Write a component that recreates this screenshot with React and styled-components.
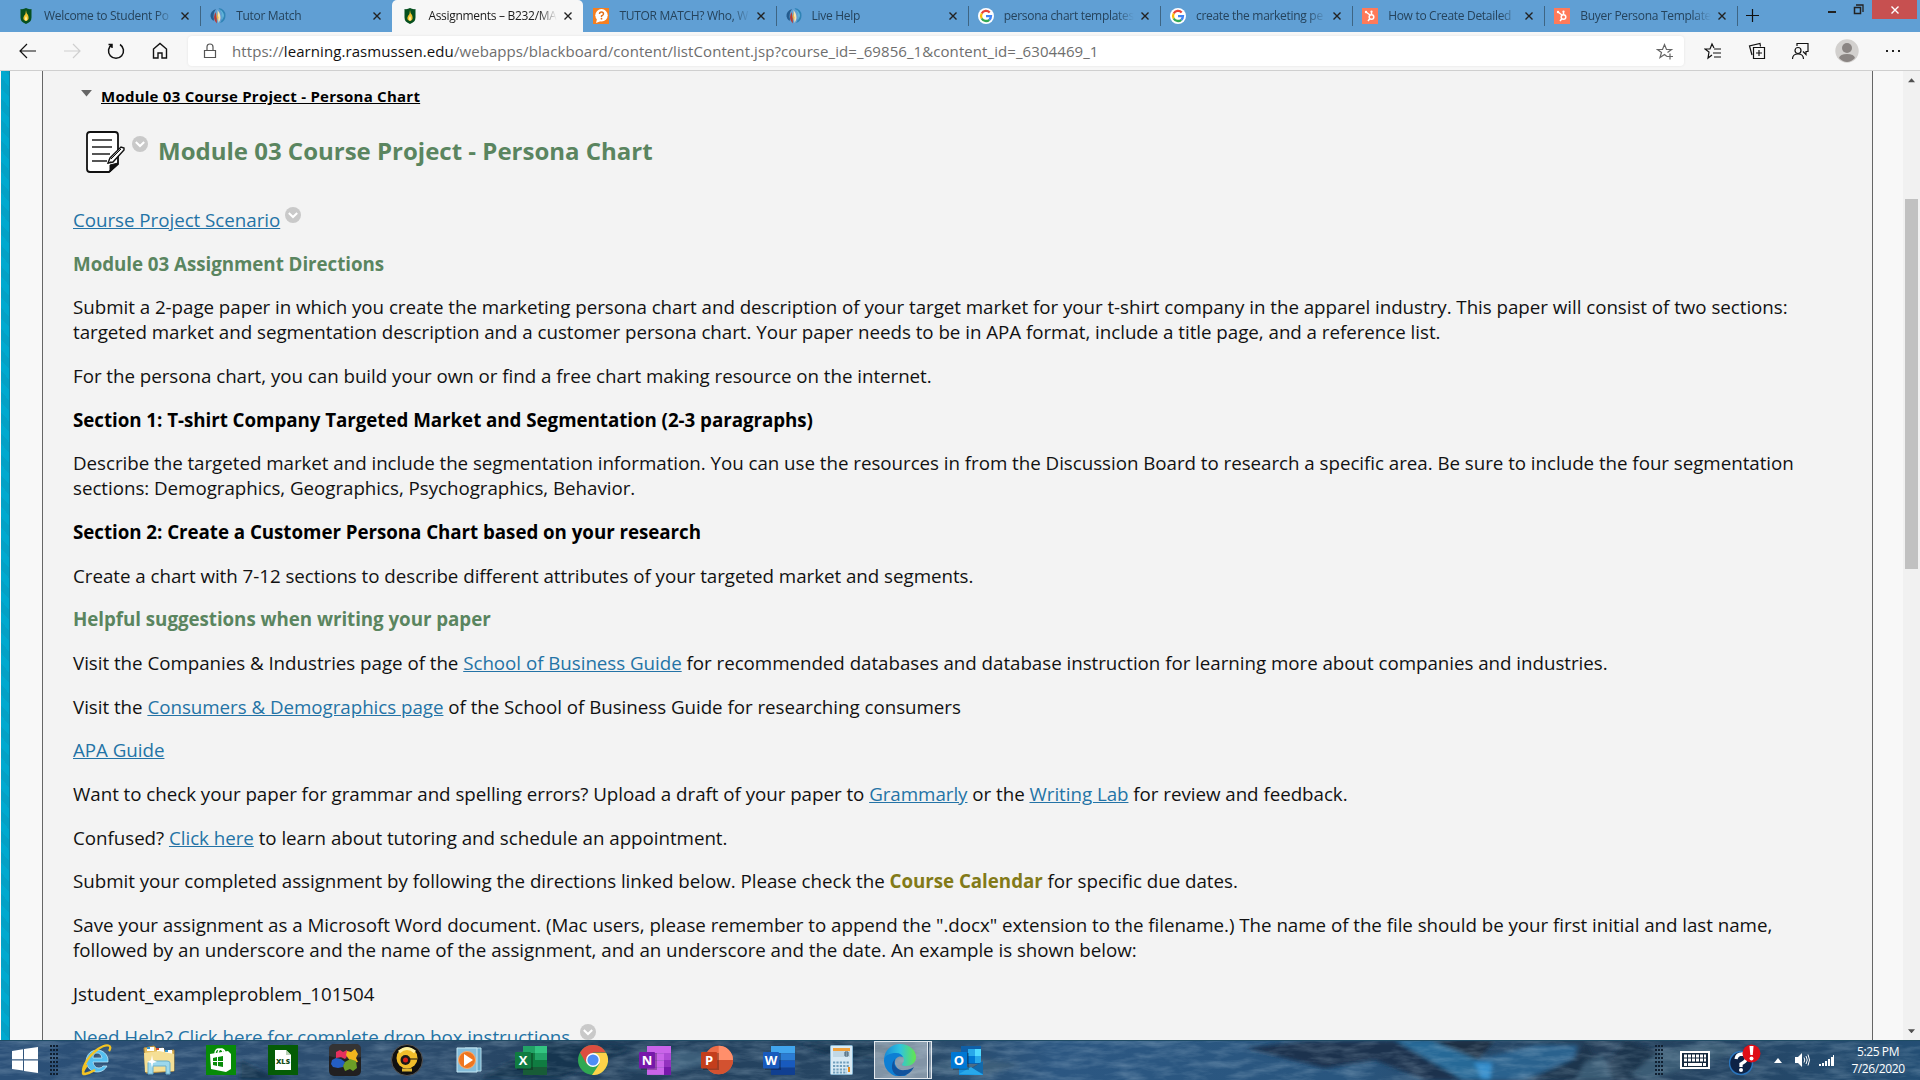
import React from "react";
import styled, { createGlobalStyle } from "styled-components";

const GlobalStyle = createGlobalStyle`
  * {
    box-sizing: border-box;
  }

  body {
    margin: 0;
    overflow: hidden;
    font-family: "Open Sans", "Noto Sans", sans-serif;
  }
`;

const Screen = styled.div`
  display: flex;
  flex-direction: column;
  width: 1920px;
  height: 1080px;
  overflow: hidden;
`;

const TabStrip = styled.div`
  display: flex;
  height: 32px;
  padding-left: 8px;
  background: #609fd4;
`;

const Tab = styled.div`
  display: flex;
  align-items: center;
  width: ${props => (props.$active ? 191 : 192.2)}px;
  padding: 0 11px 0 10px;
  border-radius: 5px 5px 0 0;
  background: ${props => (props.$active ? "#f7f7f7" : "transparent")};
  color: ${props => (props.$active ? "#1b1b1b" : "#25435c")};

  svg {
    flex: none;
  }
`;

const TabTitle = styled.span`
  flex: 1;
  margin: 0 7px 0 10px;
  overflow: hidden;
  font-size: 12px;
  letter-spacing: -0.3px;
  line-height: 18px;
  white-space: nowrap;
  mask-image: linear-gradient(90deg, #000 86%, transparent);
`;

const Separator = styled.div`
  width: 1px;
  height: 20px;
  margin: 6px -1px 0 0;
  background: #3e6583;
`;

const WindowButtons = styled.div`
  display: flex;
  margin-left: auto;
`;

const CloseWindow = styled.div`
  display: flex;
  align-items: center;
  justify-content: center;
  width: 45px;
  height: 19px;
  margin-right: 3px;
  background: #c75050;
`;

const Toolbar = styled.div`
  display: flex;
  align-items: center;
  height: 39px;
  padding: 0 18px 1px 17px;
  border-bottom: 1px solid #cfcfcf;
  background: #f7f7f7;

  > svg {
    flex: none;
  }
`;

const NavButtons = styled.div`
  display: flex;
  width: 171px;
  gap: 22px;
`;

const AddressBar = styled.div`
  display: flex;
  align-items: center;
  width: 1496px;
  height: 30px;
  padding: 0 10px 0 14px;
  border-radius: 4px;
  background: #fff;
  box-shadow: 0 0 3px rgba(0, 0, 0, 0.08);
`;

const Url = styled.div`
  flex: 1;
  margin-left: 14px;
  color: #6e6e6e;
  font-size: 15px;
  letter-spacing: 0.08px;
  line-height: 20px;
  white-space: nowrap;

  b {
    color: #111;
    font-weight: 400;
  }
`;

const ToolbarActions = styled.div`
  display: flex;
  flex: 1;
  align-items: center;
  justify-content: space-between;
  margin-left: 20px;
`;

const Page = styled.div`
  display: flex;
  height: 969px;
  background: #f8f8f8;
`;

const Stripe = styled.div`
  width: 9px;
  margin: 0 32px 0 1px;
  border-right: 1px solid #0f86a8;
  background: repeating-linear-gradient(
    48deg,
    #00a9cf 0,
    #00a9cf 7px,
    #03a1c6 7px,
    #03a1c6 14px
  );
`;

const Content = styled.main`
  width: 1831px;
  padding: 13px 0 0 30px;
  overflow: hidden;
  border: solid #666;
  border-width: 0 1px;
  background: #f3f3f3;
  color: #111;
  font-size: 18.75px;
  line-height: 25px;
`;

const Breadcrumb = styled.div`
  display: flex;
  height: 26px;
  padding-left: 8px;
  gap: 9px;

  a {
    color: #000;
    font-size: 15px;
    font-weight: 700;
    text-decoration: underline;
    letter-spacing: 0.25px;
  }

  svg {
    margin-top: 6px;
  }
`;

const TitleRow = styled.div`
  display: flex;
  height: 60px;
  margin-top: 19px;
  padding-left: 13px;

  > svg:nth-child(1) {
    margin-top: 2px;
  }

  > svg:nth-child(2) {
    margin: 7px 10px 0 7px;
  }
`;

const Title = styled.h1`
  margin: 6px 0 0;
  color: #5a855f;
  font-size: 24px;
  font-weight: 700;
  line-height: 32px;
`;

const Paragraph = styled.p`
  margin: 0 0 18.68px;
  color: ${props => (props.$green ? "#5a855f" : props.$bold ? "#000" : "#111")};
  font-weight: ${props => (props.$bold || props.$green ? 700 : 400)};
  letter-spacing: ${props => (props.$bold || props.$green ? -0.045 : -0.034)}px;
  white-space: nowrap;

  svg {
    margin: -4px 0 0 5px;
    vertical-align: 4px;
  }
`;

const Body = styled.div`
  padding-top: 18px;
`;

const Link = styled.a`
  color: #2473a6;
  text-decoration: underline;
`;

const Calendar = styled.b`
  color: #827a18;
`;

const Scrollbar = styled.div`
  display: flex;
  flex-direction: column;
  align-items: center;
  width: 17px;
  margin-left: auto;
  padding: 7px 0;
  background: #f1f1f1;

  svg:last-child {
    margin-top: auto;
  }
`;

const Thumb = styled.div`
  width: 13px;
  height: 370px;
  margin-top: 116px;
  background: #c1c1c1;
`;

const Taskbar = styled.footer`
  position: relative;
  display: flex;
  align-items: center;
  height: 40px;
  padding-left: 12px;
  overflow: hidden;
  background: #2a5179;

  > svg,
  > div {
    position: relative;
    flex: none;
  }

  > svg.wallpaper {
    position: absolute;
    inset: 0;
  }
`;

const Grip = styled.div`
  width: 9px;
  height: 31px;
  margin-left: ${props => props.$left}px;
  background: radial-gradient(circle at 1px 1px, #101f30 1px, transparent 1.3px) 0 0 / 3px 4px;
`;

const Apps = styled.div`
  display: flex;
  margin-left: 7px;
`;

const AppSlot = styled.div`
  display: flex;
  align-items: center;
  justify-content: center;
  width: 62px;
  height: 40px;

  &:last-child {
    padding-left: 3px;
  }
`;

const ActiveApp = styled.div`
  display: flex;
  align-items: center;
  width: 58px;
  height: 38px;
  padding-left: 9px;
  border: 1px solid #e3e9ef;
  background: linear-gradient(90deg, transparent 52px, #e3e9ef 52px 53px, #35506d 53px 54px, transparent 54px),
    rgba(255, 255, 255, 0.42);
`;

const Tray = styled.div`
  display: flex;
  align-items: center;
  margin-left: 16px;

  svg:nth-child(2) {
    margin: 0 13px 0 19px;
  }

  svg:nth-child(4) {
    margin: 0 9px 0 13px;
  }
`;

const Clock = styled.div`
  width: 60px;
  margin-left: 13px;
  color: #fff;
  font-size: 12px;
  line-height: 17px;
  letter-spacing: -0.4px;
  text-align: center;
`;

const Rasmussen = () => (
  <svg width="16" height="16" viewBox="0 0 16 16">
    <path d="M2.5 1Q5.5 1.5 8 0q2.500 1.500 5.500 1v8.500q0 4.500-5.500 6.500-5.500-2-5.500-6.500z" fill="#07501f" />
    <path d="M8 2q0 3 2 5 2 5-2 6-4-1-2-5 2-2 2-6z" fill="#f2c32f" />
    <path d="M8 8q2 3 0 5-2-2 0-5z" fill="#fff2a0" />
  </svg>
);

const TutorLogo = () => (
  <svg width="16" height="16" viewBox="0 0 16 16">
    <path d="M6 1Q0 3 .5 8.500q.5 3 3 4.500l.5-2Q2.500 6 6 1z" fill="#245c8f" />
    <path d="M8.500 0Q15.500 1 15.500 7.500q0 6-5.500 7.500 3-4 2-8.500Q11 2.500 8.500 0z" fill="#2f83b5" />
    <path d="M10 1.500q4 2.500 4 6.500-1 3-2 4 1-4-2-10.500z" fill="#5fb3d8" />
    <path d="M7.500 2q4 5 2.500 10l-1.500 3Q8 9 7.500 2z" fill="#f6e3b5" />
    <path d="M5.500 4Q3 9 5 13l2 2.500Q7 9 5.500 4z" fill="#b73834" />
    <path d="M7 4q-1 5 .8 9l.7-3.500z" fill="#f0b440" />
  </svg>
);

const Question = () => (
  <svg width="16" height="16" viewBox="0 0 16 16">
    <rect width="16" height="16" fill="#f57f20" />
    <circle cx="8.5" cy="7.3" r="6.2" fill="#fff" />
    <path d="m4 11-1 4 5-2z" fill="#fff" />
    <path d="M6.5 6q0-2 2-2t2 2q0 1-2 2v1" fill="none" stroke="#e26e18" strokeWidth="1.4" />
    <circle cx="8.5" cy="10.7" r=".9" fill="#e26e18" />
  </svg>
);

const Google = () => (
  <svg width="16" height="16" viewBox="0 0 16 16">
    <circle cx="8" cy="8" r="8" fill="#fff" />
    <g fill="none" strokeWidth="2.3">
      <path d="M11.7 4.5A5 5 0 0 0 3.7 5.5" stroke="#ea4335" />
      <path d="M3.7 5.5a5 5 0 0 0 0 5" stroke="#fbbc05" />
      <path d="M3.7 10.5a5 5 0 0 0 7.6 1.3" stroke="#34a853" />
      <path d="M8 8.1h5a5 5 0 0 1-1.7 3.7" stroke="#4285f4" />
    </g>
  </svg>
);

const Hubspot = () => (
  <svg width="16" height="16" viewBox="0 0 16 16">
    <rect width="16" height="16" fill="#ff7a59" />
    <g fill="none" stroke="#fff" strokeWidth="1.5">
      <circle cx="9.5" cy="9" r="2.3" />
      <path d="m4 4 4 3m1.5-3.5v3M8 10.5 6 13" />
    </g>
    <circle cx="4" cy="4" r="1.2" fill="#fff" />
    <circle cx="9.5" cy="3.5" r="1.1" fill="#fff" />
  </svg>
);

const Cross = ({ color = "#222", size = 8 }) => (
  <svg width={size} height={size} viewBox="0 0 8 8">
    <path d="m.5.5 7 7m0-7-7 7" stroke={color} strokeWidth="1.4" />
  </svg>
);

const Line = ({ children, size = 22, color = "#111", width = 1.2 }) => (
  <svg
    width={size}
    height={size}
    viewBox={`0 0 ${size} ${size}`}
    fill="none"
    stroke={color}
    strokeWidth={width}
  >
    {children}
  </svg>
);

const Chevron = () => (
  <svg width="16" height="16" viewBox="0 0 16 16">
    <circle cx="8" cy="8" r="8" fill="#c9c9c9" />
    <path d="m3.8 6 4.2 4 4.2-4" fill="none" stroke="#fff" strokeWidth="2" />
  </svg>
);

const Triangle = ({ up, width = 9, color = "#505050" }) => (
  <svg width={width} height={width / 2 + 1} viewBox="0 0 10 6">
    <path d={up ? "M0 6 5 0l5 6z" : "M0 0h10L5 6z"} fill={color} />
  </svg>
);

const Assignment = () => (
  <svg width="39" height="44" viewBox="0 0 39 44">
    <path
      d="M4 1h25q3 0 3 3v29l-9 8H4q-3 0-3-3V4q0-3 3-3z"
      fill="#fff"
      stroke="#111"
      strokeWidth="1.8"
    />
    <path d="M6 9h20M6 16h20M6 23h18M6 30h15" stroke="#555" strokeWidth="2" />
    <path d="M24 34 32 32 24 41z" fill="#111" stroke="#111" />
    <path d="m22 32 2-5 11-11 3 1v2L27 31z" fill="#fff" stroke="#111" strokeWidth="1.4" />
    <path d="m25 28 10-10M22 32l3-1" stroke="#111" />
  </svg>
);

const Wallpaper = () => (
  <svg className="wallpaper" width="1920" height="40" viewBox="0 0 1920 40">
    <defs>
      <filter id="rock" x="0" y="0" width="100%" height="100%">
        <feTurbulence type="fractalNoise" baseFrequency=".035 .14" numOctaves="4" seed="8" />
        <feColorMatrix values="0 0 0 0 .45  0 0 0 0 .6  0 0 0 0 .72  1.6 0 0 0 -.62" />
      </filter>
      <filter id="soft">
        <feGaussianBlur stdDeviation="2" />
      </filter>
      <linearGradient id="sea">
        <stop offset="0" stopColor="#2b5078" />
        <stop offset=".22" stopColor="#2c4c6d" />
        <stop offset=".32" stopColor="#213e5a" />
        <stop offset=".48" stopColor="#284866" />
        <stop offset=".55" stopColor="#2c5782" />
        <stop offset=".7" stopColor="#29567f" />
        <stop offset=".83" stopColor="#263f59" />
        <stop offset="1" stopColor="#234e74" />
      </linearGradient>
    </defs>
    <rect width="1920" height="40" fill="url(#sea)" />
    <g filter="url(#soft)">
      <path d="m1245 8 60-7h90l70 39h-40l-50-20-50 8z" fill="#1a324e" />
      <path d="m1395 0h50l43 28-3 12h-22z" fill="#256997" />
      <path d="m1430 0h65l-17 20z" fill="#1b2f42" />
      <path d="m1475 20 60-15 43 0-4 14-50 21h-42z" fill="#2c628e" />
      <path d="m1474 22 18 1-2 17h-8z" fill="#368fcd" />
      <path d="m1530 40 45-22 12-15 10 20-18 17zM1625 0l40 14-30 26h-40z" fill="#1c344d" />
      <path d="m1630 35 30-25 60-8 20 10-90 28zm-55 5 10-18 18-8 10 26z" fill="#3b5b75" />
      <path d="m240 20 40 20h-40zM550 0l80 8-70 30h-80zM800 4l55-4 70 12-80 8z" fill="#18344f" />
      <path d="m620 30 60-21 60 8-60 14zM920 30l40-15 60 10-40 12z" fill="#3e5e7a" />
    </g>
    <rect width="1920" height="40" filter="url(#rock)" opacity=".36" />
    <path d="M0 .5h1920" stroke="#1f4c64" />
  </svg>
);

const WindowsLogo = () => (
  <svg width="26" height="26" viewBox="0 0 26 26">
    <path d="M0 4 11 2.3v10H0zM12 2 26 0v12.3H12zM0 13.5h11v10L0 22zM12 13.5h14V26l-14-2z" fill="#fff" />
  </svg>
);

const InternetExplorer = () => (
  <svg width="32" height="32" viewBox="0 0 32 32">
    <path
      d="M26 22A11 11 0 1 1 27 15v3H12q1 6 6 6 3 0 4-2zM12 14h9q-1-5-5-5t-4 5z"
      fill="#55bff0"
      stroke="#c7efff"
      strokeWidth=".7"
    />
    <path d="M6 21Q-1 31 4 30q5-1 10-4M4 30C-2 28 6 13 17 5 26-1 32 1 28 7" fill="none" stroke="#f3c323" strokeWidth="2.3" />
  </svg>
);

const Explorer = () => (
  <svg width="32" height="30" viewBox="0 0 32 30">
    <path d="M1 3 11 1l3 3 6-1 2 3 9-1v21L3 28z" fill="#e5bf61" stroke="#b48b3c" />
    <path d="M4 2h7v4H4zM14 3h7v4h-7zM22 5h7v4h-7z" fill="#fff" />
    <path d="M4 2h3v2H4zM22 5h3v2h-3z" fill="#3796cc" />
    <path d="M13 3h3v2h-3z" fill="#d84a30" />
    <path d="m1 8 15-2 15 3v17L2 27z" fill="#f5df95" />
    <path d="M5 29V18q0-2 3-2h16q3 0 3 2v11h-4v-8H10v8z" fill="#9dd8ed" stroke="#6baec9" />
    <path d="m9 10 1 5 4 2-4 1-1 5-1-5-4-1 4-2z" fill="#fff" />
  </svg>
);

const Store = () => (
  <svg width="30" height="30" viewBox="0 0 30 30">
    <rect width="30" height="30" fill="#078b08" />
    <path d="m4 9 18-3 3 3v15l-5 3-15-3z" fill="#fff" />
    <path d="M9 9q0-5 4-5t4 4M12 8q1-5 4-4t3 4" fill="none" stroke="#fff" strokeWidth="1.4" />
    <path d="m7 13 4-1v4H7zm5-1 5-1v5h-5zm-5 5h4v4l-4-1zm5 0h5v5l-5-1z" fill="#078b08" />
  </svg>
);

const Xls = () => (
  <svg width="30" height="30" viewBox="0 0 30 30">
    <rect width="30" height="30" fill="#055c06" />
    <path d="M7 5h11l5 5v15H7z" fill="#fff" />
    <path d="M18 5v5h5" fill="#bad1b8" />
    <text x="15" y="19" textAnchor="middle" fontFamily="Open Sans" fontSize="7.5" fontWeight="800" fill="#164b18">
      XLS
    </text>
  </svg>
);

const Puzzle = () => (
  <svg width="32" height="32" viewBox="0 0 32 32">
    <rect width="32" height="32" rx="5" fill="#211f20" />
    <path d="M0 5q0-5 5-5h22q5 0 5 5v8Q16 17 0 12z" fill="#464445" opacity=".55" />
    <path d="m7 8 4-2 3 2 4-2 1 5-3 4-4-2-5 1z" fill="#e6305d" />
    <path d="m18 7 4 1 4-3 3 5-2 4 2 4-6 1-4-5-2-3z" fill="#f0b51d" />
    <path d="m3 16 4-2 5 1 4 3-2 5-5 1-5-1-2-3z" fill="#245ec3" />
    <path d="m16 18 5-3 6 2 1 7-4 3-3-2-5 2-2-5z" fill="#6b9d27" />
  </svg>
);

const Webcam = () => (
  <svg width="32" height="32" viewBox="0 0 32 32">
    <circle cx="16" cy="16" r="15.5" fill="#101010" stroke="#555" />
    <circle cx="16" cy="14" r="10.5" fill="#f0bd2b" />
    <path d="M8 8q8-7 16 0" stroke="#fff09d" strokeWidth="3" fill="none" />
    <circle cx="14.5" cy="16" r="5" fill="#191919" />
    <circle cx="14.5" cy="16" r="2.5" fill="#d31f18" />
    <path d="M11 26h10" stroke="#ddb533" strokeWidth="3" />
    <path d="M19 15h7" stroke="#111" />
  </svg>
);

const MediaPlayer = () => (
  <svg width="26" height="26" viewBox="0 0 26 26">
    <path d="M9 1h16v23H9z" fill="#6aa9c9" stroke="#b5ddeb" />
    <path d="M1 1h20v24H1z" fill="#85bdda" stroke="#c5e7f3" />
    <circle cx="11" cy="13" r="8.5" fill="#ef761f" stroke="#f9ad70" />
    <path d="m8 7 9 6-9 6z" fill="#fff" />
  </svg>
);

const shades = {
  N: ["#ca64ea", "#ca64ea", "#ca64ea", "#ca64ea"],
  W: ["#41a5ee", "#2b7cd3", "#185abd", "#103f91"]
};

const plates = { X: "#107c41", N: "#7719aa", P: "#c43e1c", W: "#185abd", O: "#0078d4" };

const Office = ({ letter }) => (
  <svg width="32" height="30" viewBox="0 0 32 30">
    {letter === "X" && (
      <g>
        <path d="M8 1h12v7H8z" fill="#21a366" />
        <path d="M20 1h12v7H20z" fill="#33c481" />
        <path d="M8 8h12v14H8z" fill="#107c41" />
        <path d="M20 8h12v7H20z" fill="#21a366" />
        <path d="M20 15h12v7H20z" fill="#107c41" />
        <path d="M8 22h24v8H8z" fill="#185c37" />
      </g>
    )}
    {(letter === "N" || letter === "W") &&
      shades[letter].map((color, i) => (
        <rect key={i} x="8" y={1 + i * 7.2} width="24" height="7.3" fill={color} />
      ))}
    {letter === "N" && (
      <g>
        <path d="M25 8h7v7h-7z" fill="#ae4bd5" />
        <path d="M25 15h7v7h-7z" fill="#9332bf" />
        <path d="M25 22h7v8h-7z" fill="#7719aa" />
      </g>
    )}
    {letter === "P" && (
      <g>
        <circle cx="17.7" cy="15" r="14.3" fill="#ed6c47" />
        <path d="M17.700 .7A14.300 14.300 0 0 1 32 15H17.700z" fill="#ff8f6b" />
        <path d="M3.400 15H32a14.300 14.300 0 0 1-28.600 0z" fill="#d35230" />
      </g>
    )}
    {letter === "O" && (
      <g>
        <path d="M10 1h20v18H10z" fill="#0f5fa8" />
        <path d="M17 4h7v7h-7z" fill="#28a8ea" />
        <path d="M24 4h6v7h-6z" fill="#50d9ff" />
        <path d="M17 11h7v7h-7z" fill="#0078d4" />
        <path d="M24 11h6v7h-6z" fill="#28a8ea" />
        <path d="m8 16 12 8 12-8v14H8z" fill="#1490df" />
        <path d="m20 23 12-7v13z" fill="#123b6d" opacity=".45" />
        <path d="m8 29 12-7 12 8z" fill="#28a8ea" />
      </g>
    )}
    <rect x="2" y="8" width="16" height="17" fill="#000" opacity=".25" />
    <rect y="7" width="16" height="16.5" rx="1" fill={plates[letter]} />
    <text x="8" y="19.6" textAnchor="middle" fontFamily="Open Sans" fontSize="13" fontWeight="700" fill="#fff">
      {letter}
    </text>
  </svg>
);

const Chrome = () => (
  <svg width="30" height="30" viewBox="0 0 30 30">
    <circle cx="15" cy="15" r="15" fill="#30a852" />
    <path d="M2 7.5A15 15 0 0 1 28 7.5H15L8.5 18.8z" fill="#dc4e41" />
    <path d="M28.2 8A15 15 0 0 1 14 30l7.5-11.3L15 8z" fill="#fdd249" />
    <circle cx="15" cy="15" r="7" fill="#fff" />
    <circle cx="15" cy="15" r="5.6" fill="#4e8df5" />
  </svg>
);

const Calculator = () => (
  <svg width="23" height="30" viewBox="0 0 23 30">
    <rect x=".5" y=".5" width="22" height="29" rx="1" fill="#d8eaf4" stroke="#86b5d2" />
    <path d="M3 3h17v3H3z" fill="#efa13d" />
    <path d="M3 6h17v6H3z" fill="#c1d8e5" />
    <path d="M15 7h3v4h-3zM15 9h3" fill="none" stroke="#405c70" />
    <path d="M3 17.5h16M3 21h16M3 24.5h14M3 27.5h14" stroke="#709fbd" strokeWidth="2" strokeDasharray="2.2 1.2" />
    <path d="M18 22h2v5h-2z" fill="#e58b1d" />
  </svg>
);

const Edge = () => (
  <svg width="32" height="32" viewBox="0 0 32 32">
    <defs>
      <linearGradient id="edgeTop">
        <stop offset="0" stopColor="#1688d7" />
        <stop offset=".5" stopColor="#2fc3df" />
        <stop offset="1" stopColor="#64e64b" />
      </linearGradient>
    </defs>
    <path d="M0 16C0 6 8 0 16 0c9 0 16 6 16 13 0 6-5 9-10 9-4 0-5-1-3-3 3-5-1-9-7-9C5 10 1 14 0 16z" fill="url(#edgeTop)" />
    <path d="M0 16c1-5 6-7 12-7 4 0 6 2 7 4-5-2-9 2-8 7 2 6 8 9 12 11A16 16 0 0 1 0 16z" fill="#0d7fd4" />
    <path d="M11 15c-3 8 4 12 10 11 4 0 7-2 9-3-3 6-8 9-14 9C7 31 6 20 11 15z" fill="#12539d" />
  </svg>
);

const Keyboard = () => (
  <svg width="30" height="18" viewBox="0 0 30 18">
    <rect x="1" y="1" width="28" height="16" fill="#14283c" stroke="#fff" strokeWidth="2" />
    <path d="M4 5h22M4 9h22" stroke="#fff" strokeWidth="3" strokeDasharray="3 1" />
    <path d="M4 13.5h3m1 0h14m1 0h3" stroke="#fff" strokeWidth="3" />
  </svg>
);

const Help = () => (
  <svg width="32" height="32" viewBox="0 0 32 32">
    <circle cx="12" cy="19" r="11.5" fill="#0d2346" stroke="#2a75bd" strokeWidth="1.5" />
    <path d="M7 15q1-5 6-5 6 1 4 6-1 2-5 4v3" fill="none" stroke="#fff" strokeWidth="3.3" />
    <circle cx="12" cy="26" r="2" fill="#fff" />
    <circle cx="22.5" cy="9.5" r="9" fill="#df0e17" />
    <path d="M20.5 2h4l-.7 9h-2.5z" fill="#fff" />
    <circle cx="22.5" cy="14.6" r="2" fill="#fff" />
  </svg>
);

const Speaker = () => (
  <svg width="15" height="14" viewBox="0 0 15 14" fill="none" stroke="#fff">
    <path d="M0 4h3l4-4v14l-4-4H0z" fill="#fff" stroke="none" />
    <path d="M9 4.5q1.5 2.5 0 5M11 3q2.5 4 0 8M13 1.5q3 5.5 0 11" />
  </svg>
);

const Signal = () => (
  <svg width="16" height="11" viewBox="0 0 16 11">
    <path d="M0 9h2v2H0zM3 8h2v3H3zM6 6h2v5H6zM9 4h2v7H9zM12 2h2v9h-2zM14 0h1v11h-1z" fill="#fff" />
  </svg>
);

const tabs = [
  { title: "Welcome to Student Po", icon: Rasmussen },
  { title: "Tutor Match", icon: TutorLogo },
  { title: "Assignments – B232/MA", icon: Rasmussen, active: true },
  { title: "TUTOR MATCH? Who, W", icon: Question },
  { title: "Live Help", icon: TutorLogo },
  { title: "persona chart templates", icon: Google },
  { title: "create the marketing pe", icon: Google },
  { title: "How to Create Detailed", icon: Hubspot },
  { title: "Buyer Persona Template", icon: Hubspot }
];

const Browser = () => (
  <>
    <TabStrip>
      {tabs.map(({ title, icon: Icon, active }, i) => (
        <React.Fragment key={i}>
          <Tab $active={active}>
            <Icon />
            <TabTitle>{title}</TabTitle>
            <Cross />
          </Tab>
          {i !== 1 && i !== 2 && <Separator />}
        </React.Fragment>
      ))}
      <Line size={32}>
        <path d="M9 15.5h13M15.5 9v13" />
      </Line>
      <WindowButtons>
        <Line size={55} color="#222" width={2}>
          <path d="M11 12h8" />
          <path d="M37.500 7.500h6v6h-6z" strokeWidth="1.5" />
          <path d="M39 5h7v7" strokeWidth="1.3" />
        </Line>
        <CloseWindow>
          <Cross color="#fff" />
        </CloseWindow>
      </WindowButtons>
    </TabStrip>
    <Toolbar>
      <NavButtons>
        <Line>
          <path d="M19 11H3m7-7-7 7 7 7" />
        </Line>
        <Line color="#cfcfcf">
          <path d="M3 11h16m-7-7 7 7-7 7" />
        </Line>
        <Line width={1.5}>
          <path d="M7 4.5a7.5 7.5 0 1 0 8 0M3.5 4.5H7V8" />
        </Line>
        <Line width={1.4}>
          <path d="m4.5 9 6.5-5.5L17.5 9v9H13v-5H9v5H4.5z" />
        </Line>
      </NavButtons>
      <AddressBar>
        <Line size={16} color="#555">
          <path d="M2.5 7.5h11v7h-11zM5 7V4q0-3 3-3t3 3v3" />
        </Line>
        <Url>
          https://<b>learning.rasmussen.edu</b>/webapps/blackboard/content/listContent.jsp?course_id=_69856_1&amp;content_id=_6304469_1
        </Url>
        <Line size={18} color="#666">
          <path d="M11 14.500 8.500 12.500 4 15.500l1.500-5L1.500 7.500h5L8.500 2.500l2 5h5l-4 3M14 11.500v6m-3-3h6" />
        </Line>
      </AddressBar>
      <ToolbarActions>
        <Line size={18}>
          <path d="M10 6 8 2 6 7H1l4 3-1 6 4-3M10 7h7M9 11h8M10 15h7" />
        </Line>
        <Line size={18}>
          <path d="M5.5 5.5h11v11h-11zM11 8v6M8 11h6M4 13 1.5 4 12 1.5l.5 3" />
        </Line>
        <Line size={18}>
          <circle cx="7" cy="8.5" r="3" />
          <path d="M1.5 17q0-5 5.5-5t5.5 5M6 4V1.5h11v8h-2v3l-3-3" />
        </Line>
        <svg width="24" height="24" viewBox="0 0 24 24">
          <circle cx="12" cy="12" r="11.7" fill="#d2d0ce" />
          <circle cx="12" cy="9" r="5" fill="#8a8583" />
          <path d="M4 19q1-4 8-4t8 4q-8 8-16 0z" fill="#8a8583" />
        </svg>
        <svg width="18" height="18" viewBox="0 0 18 18">
          <path d="M2 8h2v2H2zm6 0h2v2H8zm6 0h2v2h-2z" fill="#222" />
        </svg>
      </ToolbarActions>
    </Toolbar>
  </>
);

const Directions = () => (
  <Body>
    <Paragraph>
      <Link>Course Project Scenario</Link>
      <Chevron />
    </Paragraph>
    <Paragraph $green>Module 03 Assignment Directions</Paragraph>
    <Paragraph>
      Submit a 2-page paper in which you create the marketing persona chart and description of your target market for your t-shirt company in the apparel industry. This paper will consist of two sections:
      <br />
      targeted market and segmentation description and a customer persona chart. Your paper needs to be in APA format, include a title page, and a reference list.
    </Paragraph>
    <Paragraph>
      For the persona chart, you can build your own or find a free chart making resource on the internet.
    </Paragraph>
    <Paragraph $bold>
      Section 1: T-shirt Company Targeted Market and Segmentation (2-3 paragraphs)
    </Paragraph>
    <Paragraph>
      Describe the targeted market and include the segmentation information. You can use the resources in from the Discussion Board to research a specific area. Be sure to include the four segmentation
      <br />
      sections: Demographics, Geographics, Psychographics, Behavior.
    </Paragraph>
    <Paragraph $bold>
      Section 2: Create a Customer Persona Chart based on your research
    </Paragraph>
    <Paragraph>
      Create a chart with 7-12 sections to describe different attributes of your targeted market and segments.
    </Paragraph>
    <Paragraph $green>Helpful suggestions when writing your paper</Paragraph>
    <Paragraph>
      Visit the Companies &amp; Industries page of the <Link>School of Business Guide</Link> for recommended databases and database instruction for learning more about companies and industries.
    </Paragraph>
    <Paragraph>
      Visit the <Link>Consumers &amp; Demographics page</Link> of the School of Business Guide for researching consumers
    </Paragraph>
    <Paragraph>
      <Link>APA Guide</Link>
    </Paragraph>
    <Paragraph>
      Want to check your paper for grammar and spelling errors? Upload a draft of your paper to <Link>Grammarly</Link> or the <Link>Writing Lab</Link> for review and feedback.
    </Paragraph>
    <Paragraph>
      Confused? <Link>Click here</Link> to learn about tutoring and schedule an appointment.
    </Paragraph>
    <Paragraph>
      Submit your completed assignment by following the directions linked below. Please check the <Calendar>Course Calendar</Calendar> for specific due dates.
    </Paragraph>
    <Paragraph>
      Save your assignment as a Microsoft Word document. (Mac users, please remember to append the ".docx" extension to the filename.) The name of the file should be your first initial and last name,
      <br />
      followed by an underscore and the name of the assignment, and an underscore and the date. An example is shown below:
    </Paragraph>
    <Paragraph>Jstudent_exampleproblem_101504</Paragraph>
    <Paragraph>
      <Link>Need Help? Click here for complete drop box instructions.</Link>
      <Chevron />
    </Paragraph>
  </Body>
);

const App = () => (
  <Screen>
    <GlobalStyle />
    <Browser />
    <Page>
      <Stripe />
      <Content>
        <Breadcrumb>
          <Triangle width={11} color="#666" />
          <a>Module 03 Course Project - Persona Chart</a>
        </Breadcrumb>
        <TitleRow>
          <Assignment />
          <Chevron />
          <Title>Module 03 Course Project - Persona Chart</Title>
        </TitleRow>
        <Directions />
      </Content>
      <Scrollbar>
        <Triangle up width={7} />
        <Thumb />
        <Triangle width={7} />
      </Scrollbar>
    </Page>
    <Taskbar>
      <Wallpaper />
      <WindowsLogo />
      <Grip $left={12} />
      <Apps>
        <AppSlot><InternetExplorer /></AppSlot>
        <AppSlot><Explorer /></AppSlot>
        <AppSlot><Store /></AppSlot>
        <AppSlot><Xls /></AppSlot>
        <AppSlot><Puzzle /></AppSlot>
        <AppSlot><Webcam /></AppSlot>
        <AppSlot><MediaPlayer /></AppSlot>
        <AppSlot><Office letter="X" /></AppSlot>
        <AppSlot><Chrome /></AppSlot>
        <AppSlot><Office letter="N" /></AppSlot>
        <AppSlot><Office letter="P" /></AppSlot>
        <AppSlot><Office letter="W" /></AppSlot>
        <AppSlot><Calculator /></AppSlot>
        <AppSlot>
          <ActiveApp><Edge /></ActiveApp>
        </AppSlot>
        <AppSlot><Office letter="O" /></AppSlot>
      </Apps>
      <Grip $left={659} />
      <Tray>
        <Keyboard />
        <Help />
        <Triangle up width={8} color="#fff" />
        <Speaker />
        <Signal />
      </Tray>
      <Clock>
        5:25 PM
        <br />
        7/26/2020
      </Clock>
    </Taskbar>
  </Screen>
);

export default App;
